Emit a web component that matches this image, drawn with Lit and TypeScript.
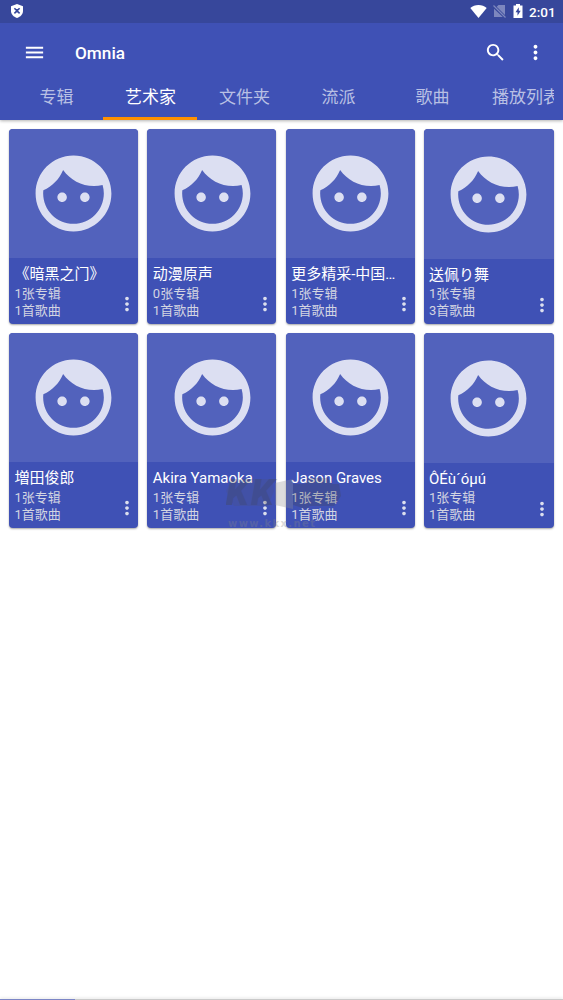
import { LitElement, html, css, svg } from "lit";
import { customElement, property } from "lit/decorators.js";

const dots = svg`<path d="M12 8c1.100 0 2-.9 2-2s-.9-2-2-2-2 .9-2 2 .9 2 2 2zm0 2c-1.100 0-2 .9-2 2s.9 2 2 2 2-.9 2-2-.9-2-2-2zm0 6c-1.100 0-2 .9-2 2s.9 2 2 2 2-.9 2-2-.9-2-2-2z"/>`;

interface Artist {
  name: string;
  albums: number;
  songs: number;
}

const artists: Artist[] = [
  { name: "《暗黑之门》", albums: 1, songs: 1 },
  { name: "动漫原声", albums: 0, songs: 1 },
  { name: "更多精采-中国…", albums: 1, songs: 1 },
  { name: "送佩り舞", albums: 1, songs: 3 },
  { name: "増田俊郎", albums: 1, songs: 1 },
  { name: "Akira Yamaoka", albums: 1, songs: 1 },
  { name: "Jason Graves", albums: 1, songs: 1 },
  { name: "ÔÉù´óµú", albums: 1, songs: 1 },
];

const tabs = ["专辑", "艺术家", "文件夹", "流派", "歌曲", "播放列表"];

@customElement("artist-card")
class ArtistCard extends LitElement {
  @property({ attribute: false }) artist!: Artist;

  static styles = css`
    :host {
      display: flex;
      flex-direction: column;
      height: 195px;
      border-radius: 4px;
      overflow: hidden;
      background: #3f51b5;
      box-shadow: 0 1px 2px rgba(0, 0, 0, 0.35);
      color: #fff;
    }
    .art {
      flex: 1;
      display: flex;
      align-items: center;
      justify-content: center;
      background: #5262bc;
      padding: 0.5px 0 0 0.5px;
    }
    .face {
      width: 91px;
      height: 91px;
      fill: #dcdff2;
      flex: none;
    }
    .info {
      height: 66px;
      box-sizing: border-box;
      padding: 6px 0 0 5.500px;
      display: flex;
      flex-direction: column;
      position: relative;
    }
    :host(.wide) .art {
      padding: 0;
    }
    :host(.wide) .info {
      height: 65px;
      padding-left: 5px;
    }
    .name {
      font-size: 15px;
      line-height: 20px;
      height: 21px;
      white-space: nowrap;
    }
    :host(.wide) .name {
      height: 20px;
    }
    .sub {
      font-size: 13px;
      line-height: 17px;
      color: #d3d5e2;
      white-space: nowrap;
    }
    .more {
      position: absolute;
      right: 0;
      top: 34.500px;
      width: 22px;
      height: 22px;
      fill: #dcdfee;
    }
    :host(.wide) .more {
      right: 0.8px;
    }
  `;

  render() {
    const a = this.artist;
    return html`
      <div class="art">
        <svg class="face" viewBox="0 0 24 24">
          <path d="M9 11.750c-.69 0-1.250.56-1.250 1.250s.56 1.250 1.250 1.250 1.250-.56 1.250-1.250-.56-1.250-1.250-1.250zm6 0c-.69 0-1.250.56-1.250 1.250s.56 1.250 1.250 1.250 1.250-.56 1.250-1.250-.56-1.250-1.250-1.250zM12 2C6.480 2 2 6.480 2 12s4.480 10 10 10 10-4.480 10-10S17.520 2 12 2zm0 18c-4.410 0-8-3.590-8-8 0-.29.02-.58.05-.86 2.360-1.050 4.230-2.980 5.210-5.370C11.070 8.330 14.050 10 17.420 10c.78 0 1.530-.09 2.250-.26.21.71.33 1.470.33 2.260 0 4.410-3.590 8-8 8z"/>
        </svg>
      </div>
      <div class="info">
        <div class="name">${a.name}</div>
        <div class="sub">${a.albums}张专辑</div>
        <div class="sub">${a.songs}首歌曲</div>
        <svg class="more" viewBox="0 0 24 24">${dots}</svg>
      </div>
    `;
  }
}

@customElement("app-root")
class AppRoot extends LitElement {
  static styles = css`
    :host {
      display: flex;
      flex-direction: column;
      position: relative;
      height: 1000px;
      overflow: hidden;
      background: #fff;
      font-family: Roboto, "Noto Sans CJK SC", sans-serif;
    }
    .header {
      height: 120px;
      background: #3f51b5;
      color: #fff;
      box-shadow: 0 1px 3px rgba(0, 0, 0, 0.3);
      display: flex;
      flex-direction: column;
      flex: none;
    }
    .status {
      height: 22.500px;
      background: #37479b;
      display: flex;
      align-items: center;
      padding: 0 8px 0 9px;
    }
    .status svg {
      display: block;
      fill: #fff;
    }
    .spacer {
      flex: 1;
    }
    .wifi {
      margin-right: 6px;
    }
    .sim {
      opacity: 0.35;
      margin-right: 7px;
    }
    .battery {
      margin-right: 6px;
    }
    .clock {
      font-size: 13.500px;
      font-weight: 500;
      line-height: 22px;
      width: 26px;
      white-space: nowrap;
      padding-top: 1px;
    }
    .bar {
      height: 60px;
      display: flex;
      align-items: center;
      padding: 0 16.500px 0 22.500px;
    }
    .bar svg {
      display: block;
      fill: #fff;
    }
    .title {
      font-size: 17.200px;
      font-weight: 500;
      margin-left: 29.500px;
      line-height: 24px;
    }
    .search {
      margin-right: 17px;
    }
    .tabs {
      flex: 1;
      display: flex;
      margin: 0 9px;
      overflow: hidden;
    }
    .tab {
      width: 94px;
      flex: none;
      box-sizing: border-box;
      text-align: center;
      font-size: 17px;
      line-height: 29px;
      white-space: nowrap;
      color: #b9c0e4;
      border-bottom: 3px solid transparent;
      padding-left: 1px;
    }
    .tab:last-child {
      padding-left: 0;
    }
    .tab.active {
      color: #fff;
      border-bottom-color: #ff9100;
    }
    .grid {
      display: grid;
      grid-template-columns: 129px 129px 129px 130px;
      justify-content: space-between;
      row-gap: 9px;
      padding: 9px 9px 0;
    }
    .watermark {
      position: absolute;
      left: 224px;
      top: 474px;
      width: 122px;
      height: 56px;
      opacity: 0.3;
    }
    .mark {
      font: italic 900 37px Roboto, sans-serif;
    }
    .url {
      font: 700 10px "DejaVu Sans", sans-serif;
    }
    .progress {
      margin-top: auto;
      height: 1px;
      display: flex;
      background: #cacaca;
      box-shadow: 0 -1px 3px rgba(0, 0, 0, 0.18);
    }
    .played {
      width: 75px;
      background: #7c86c6;
    }
  `;

  render() {
    return html`
      <div class="header">
        <div class="status">
          <svg width="16" height="16" viewBox="0 0 16 16">
            <path d="M8 1l6 2.200v4.800c0 3.300-2.500 5.800-6 7-3.500-1.200-6-3.700-6-7V3.200z"/>
            <path d="M5.400 5.200l5.200 5.200M10.600 5.200L5.400 10.400M8 6v3.600" stroke="#37479b" stroke-width="1.600"/>
          </svg>
          <span class="spacer"></span>
          <svg class="wifi" width="17" height="13" viewBox="0 0 17 13">
            <path d="M8.500 13L.3 3C2.500 1.100 5.300 0 8.500 0s6 1.100 8.200 3z"/>
          </svg>
          <svg class="sim" width="13" height="14" viewBox="0 0 13 14">
            <path d="M5.500 1H12v10L3.700 2.800zM1 4.800L9.800 13H1z"/>
            <path d="M.5 1.500l12 12" stroke="#fff" stroke-width="1.200"/>
          </svg>
          <svg class="battery" width="10" height="14" viewBox="0 0 10 14">
            <path d="M3 0h4v1.500h2.500V14h-9V1.500H3z"/>
            <path d="M5.800 3.200L2.500 8.200h2v3.600l3.200-5H5.800z" fill="#37479b"/>
          </svg>
          <span class="clock">2:01</span>
        </div>
        <div class="bar">
          <svg width="23" height="23" viewBox="0 0 24 24">
            <path d="M3 18h18v-2H3v2zm0-5h18v-2H3v2zm0-7v2h18V6H3z"/>
          </svg>
          <span class="title">Omnia</span>
          <span class="spacer"></span>
          <svg class="search" width="23" height="23" viewBox="0 0 24 24">
            <path d="M15.500 14h-.79l-.28-.27C15.410 12.590 16 11.110 16 9.500 16 5.910 13.090 3 9.500 3S3 5.910 3 9.500 5.910 16 9.500 16c1.610 0 3.090-.59 4.230-1.570l.27.28v.79l5 4.990L20.490 19l-4.990-5zm-6 0C7.010 14 5 11.990 5 9.500S7.010 5 9.500 5 14 7.010 14 9.500 11.990 14 9.500 14z"/>
          </svg>
          <svg width="23" height="23" viewBox="0 0 24 24">${dots}</svg>
        </div>
        <div class="tabs">
          ${tabs.map((t, i) => html`<div class="tab ${i === 1 ? "active" : ""}">${t}</div>`)}
        </div>
      </div>
      <div class="grid">
        ${artists.map((a, i) => html`<artist-card class=${i % 4 === 3 ? "wide" : ""} .artist=${a}></artist-card>`)}
      </div>
      <svg class="watermark" viewBox="0 0 122 56">
        <path d="M2 17L8 5h40l2 12-6 15H10z" fill="#555" opacity=".5"/>
        <g fill="#444">
          <text class="mark" x="2" y="31" textLength="48">KK</text>
          <path d="M69 10h12l3-6h20l4 6h7l2 12-7 10H86l-4 3-13-4z" opacity=".8"/>
        </g>
        <path d="M51 9l18-4v30l-18-4z" fill="#909090"/>
        <text class="url" x="4" y="53" textLength="87" fill="#888">www.kkx.net</text>
      </svg>
      <div class="progress"><div class="played"></div></div>
    `;
  }
}
